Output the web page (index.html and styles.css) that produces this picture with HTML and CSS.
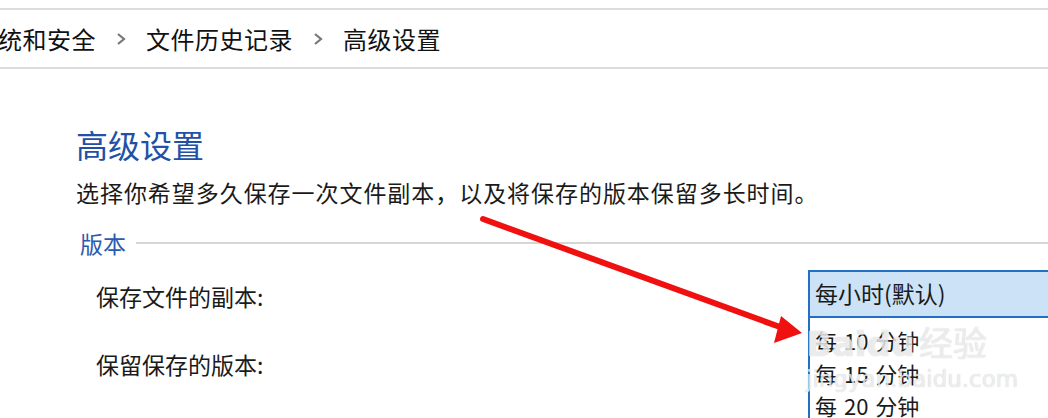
FILE: index.html
```html
<!DOCTYPE html>
<html>

<head>
  <meta charset="UTF-8">
  <meta name="viewport" content="width=device-width, initial-scale=1">
  <title>高级设置</title>
  <link rel="stylesheet" href="styles.css">
</head>

<body>
  <header class="crumbs">
    <span>统和安全</span>
    <svg class="chev" width="12" height="14" viewBox="0 0 12 14"><path d="M3 2 L9 7 L3 12" fill="none" stroke="#777" stroke-width="2.2"/></svg>
    <span>文件历史记录</span>
    <svg class="chev" width="12" height="14" viewBox="0 0 12 14"><path d="M3 2 L9 7 L3 12" fill="none" stroke="#777" stroke-width="2.2"/></svg>
    <span>高级设置</span>
  </header>

  <main class="page">
    <h1>高级设置</h1>
    <p class="desc">选择你希望多久保存一次文件副本，以及将保存的版本保留多长时间。</p>

    <div class="group">
      <span class="group-title">版本</span>
      <span class="group-line"></span>
    </div>

    <div class="row">
      <label>保存文件的副本:</label>
      <div class="select">
        <div class="selected">每小时(默认)</div>
        <ul class="options">
          <li>每 10 分钟</li>
          <li>每 15 分钟</li>
          <li>每 20 分钟</li>
        </ul>
      </div>
    </div>

    <div class="row second">
      <label>保留保存的版本:</label>
    </div>
  </main>

  <div class="watermark">
    <div class="wm-logo">Baidu<span>经验</span></div>
    <div class="wm-url">jingyan.baidu.com</div>
  </div>

  <!-- red annotation arrow -->
  <svg class="arrow" width="1048" height="418" viewBox="0 0 1048 418">
    <line x1="483" y1="219" x2="780" y2="327" stroke="#f01010" stroke-width="6" stroke-linecap="round"/>
    <polygon points="802,333 774,343 781,316" fill="#f01010"/>
  </svg>
</body>

</html>
```

FILE: styles.css
```css
*{
  box-sizing: border-box;
  margin: 0;
  padding: 0;
}

body{
  font-family: "Noto Sans CJK SC", "Noto Sans", sans-serif;
  color: #1a1a1a;
  background: #fff;
  width: 1048px;
  height: 418px;
  overflow: hidden;
  position: relative;
}

.crumbs{
  margin-top: 8px;
  height: 61px;
  border-top: 2px solid #dcdcdc;
  border-bottom: 2px solid #dcdcdc;
  display: flex;
  align-items: center;
  gap: 19px;
  margin-left: -2px;
  font-size: 24px;
  line-height: 1;
  letter-spacing: 0.5px;
  color: #111;
}

.page{
  padding-left: 76px;
}
.page h1{
  font-weight: normal;
  font-size: 32px;
  line-height: 40px;
  color: #2150a6;
  margin-top: 55px;
}
.desc{
  font-size: 23px;
  line-height: 30px;
  margin-top: 13px;
  letter-spacing: 0.95px;
}

.group{
  display: flex;
  align-items: center;
  gap: 10px;
  margin-top: 22px;
  padding-left: 4px;
}
.group-title{
  font-size: 23px;
  line-height: 28px;
  color: #2d5aac;
}
.group-line{
  flex: 1;
  height: 2px;
  background: #d6d6d6;
}

.row{
  display: flex;
  align-items: center;
  justify-content: space-between;
  height: 48px;
  margin-top: 13px;
  padding-left: 20px;
}
.row label{
  font-size: 23px;
  line-height: 30px;
  padding-top: 4px;
}
.row.second{
  margin-top: 20px;
}

.select{
  position: relative;
  width: 240px;
  height: 48px;
}
.selected{
  height: 48px;
  border: 2px solid #2170c2;
  border-right: none;
  background: #cce3f7;
  font-size: 23px;
  line-height: 43px;
  padding-left: 5px;
}
.options{
  position: absolute;
  top: 48px;
  left: 0;
  right: 0;
  list-style: none;
  background: #fff;
  border-left: 2px solid #2170c2;
  padding-top: 6px;
}
.options li{
  font-size: 22px;
  line-height: 32.5px;
  padding-left: 5px;
  word-spacing: 2px;
}

.watermark{
  position: absolute;
  left: 806px;
  top: 320px;
  color: rgba(255,255,255,0.7);
  text-shadow: 0 0 1px rgba(140,140,140,0.55);
  pointer-events: none;
}
.wm-logo{
  font-family: "DejaVu Sans", sans-serif;
  font-size: 34px;
  line-height: 44px;
  font-weight: bold;
}
.wm-logo span{
  font-family: "Noto Sans CJK SC", sans-serif;
  font-weight: normal;
  margin-left: 4px;
}
.wm-url{
  font-family: "DejaVu Sans", sans-serif;
  font-size: 23px;
  line-height: 26px;
}

.arrow{
  position: absolute;
  left: 0;
  top: 0;
  pointer-events: none;
}
```
